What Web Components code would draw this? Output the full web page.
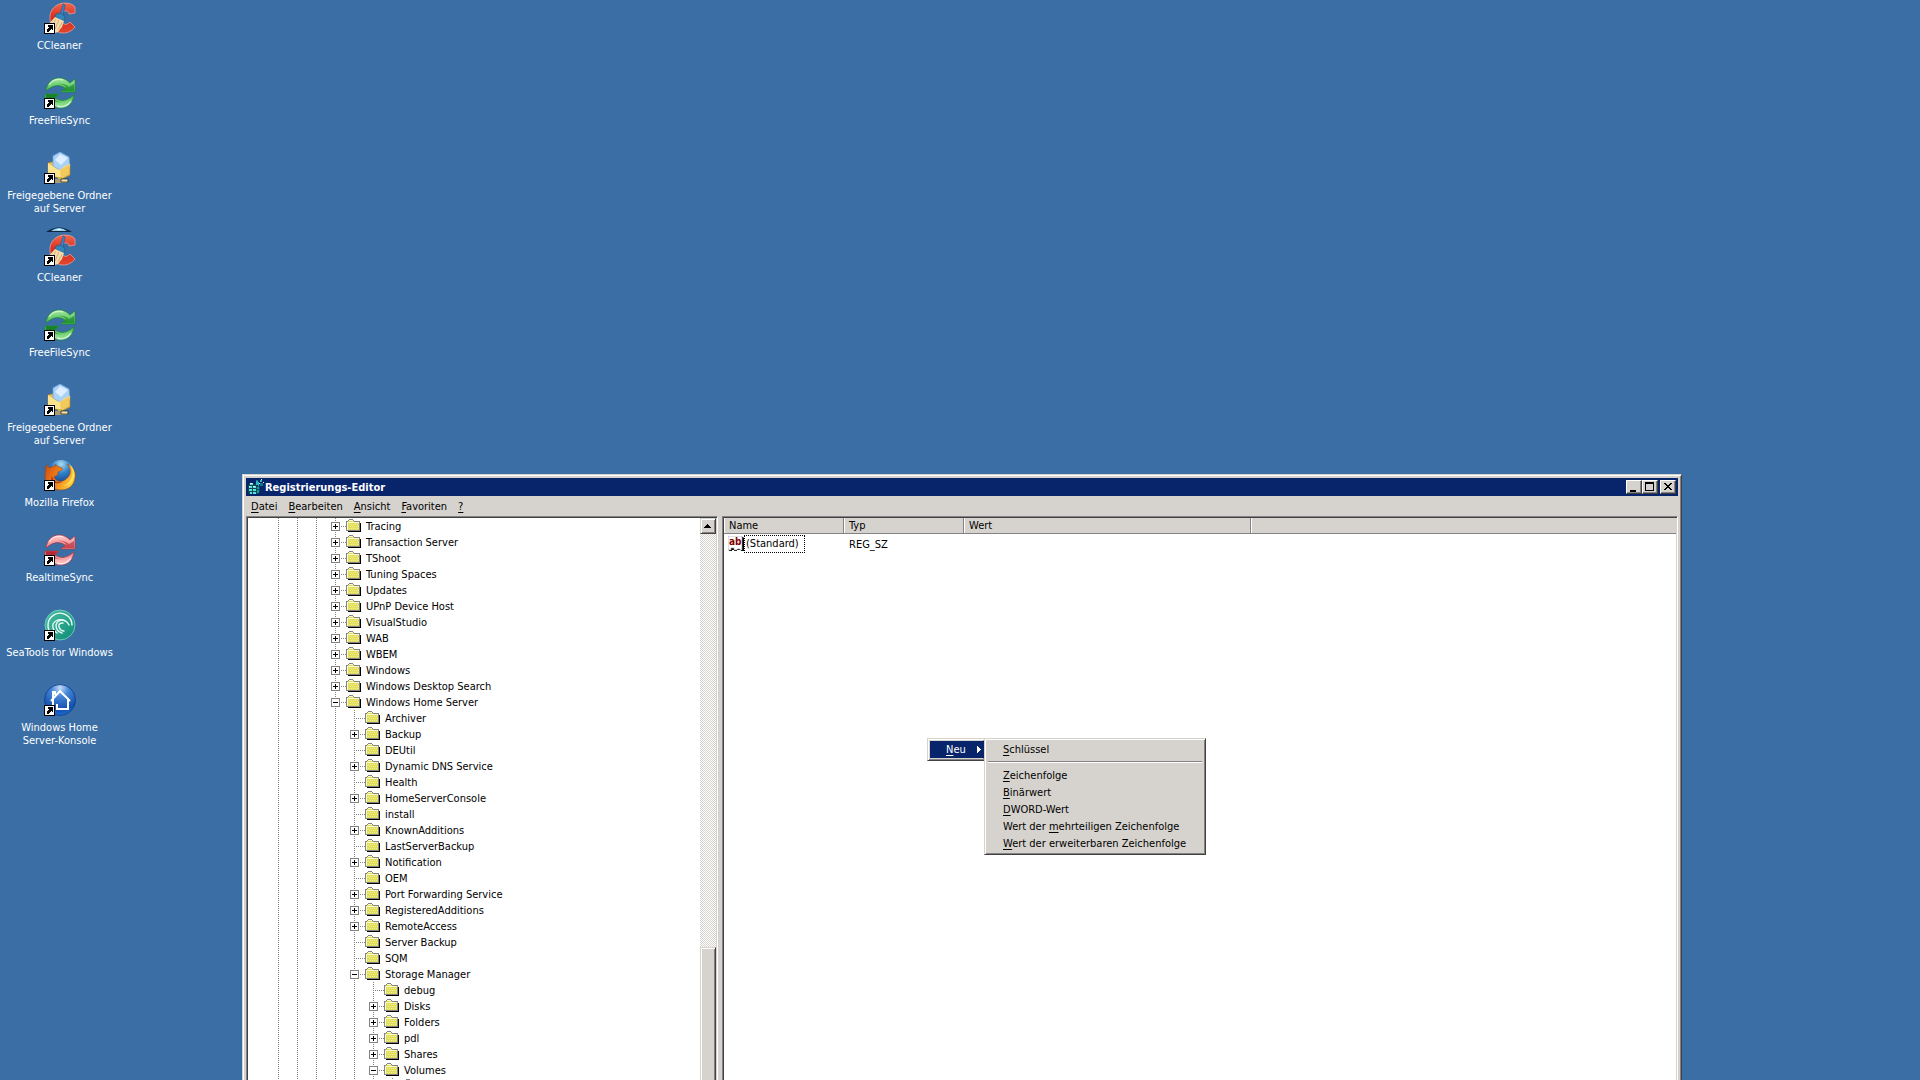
<!DOCTYPE html>
<html lang="de">
<head>
<meta charset="utf-8">
<title>Registrierungs-Editor</title>
<style>
html, body { height: 100%; margin: 0; }
body {
  --face: #d6d3ce; --shadow: #848284; --dark: #424142; --navy: #08246b;
  position: relative; overflow: hidden; background: #3a6ea5;
  font: 11px/13px "DejaVu Sans Condensed", "Liberation Sans", sans-serif; color: #000;
}
</style>
</head>
<body>
<desk-top>
  <desk-group>
    <desk-icon kind="ccleaner">CCleaner</desk-icon>
    <desk-icon kind="sync">FreeFileSync</desk-icon>
    <desk-icon kind="shared">Freigegebene Ordner auf Server</desk-icon>
  </desk-group>
  <desk-group>
    <desk-icon kind="ccleaner" peek>CCleaner</desk-icon>
    <desk-icon kind="sync">FreeFileSync</desk-icon>
    <desk-icon kind="shared">Freigegebene Ordner auf Server</desk-icon>
    <desk-icon kind="firefox">Mozilla Firefox</desk-icon>
    <desk-icon kind="realtime">RealtimeSync</desk-icon>
    <desk-icon kind="seatools">SeaTools for Windows</desk-icon>
    <desk-icon kind="home">Windows Home Server-Konsole</desk-icon>
  </desk-group>
</desk-top>

<app-window>
  <span slot="title">Registrierungs-Editor</span>
  <menu-entry slot="menu"><u>D</u>atei</menu-entry>
  <menu-entry slot="menu"><u>B</u>earbeiten</menu-entry>
  <menu-entry slot="menu"><u>A</u>nsicht</menu-entry>
  <menu-entry slot="menu"><u>F</u>avoriten</menu-entry>
  <menu-entry slot="menu"><u>?</u></menu-entry>
  <reg-tree slot="tree">
    <tree-row depth="0" state="plus">Tracing</tree-row>
    <tree-row depth="0" state="plus">Transaction Server</tree-row>
    <tree-row depth="0" state="plus">TShoot</tree-row>
    <tree-row depth="0" state="plus">Tuning Spaces</tree-row>
    <tree-row depth="0" state="plus">Updates</tree-row>
    <tree-row depth="0" state="plus">UPnP Device Host</tree-row>
    <tree-row depth="0" state="plus">VisualStudio</tree-row>
    <tree-row depth="0" state="plus">WAB</tree-row>
    <tree-row depth="0" state="plus">WBEM</tree-row>
    <tree-row depth="0" state="plus">Windows</tree-row>
    <tree-row depth="0" state="plus">Windows Desktop Search</tree-row>
    <tree-row depth="0" state="minus">Windows Home Server</tree-row>
    <tree-row depth="1">Archiver</tree-row>
    <tree-row depth="1" state="plus">Backup</tree-row>
    <tree-row depth="1">DEUtil</tree-row>
    <tree-row depth="1" state="plus">Dynamic DNS Service</tree-row>
    <tree-row depth="1">Health</tree-row>
    <tree-row depth="1" state="plus">HomeServerConsole</tree-row>
    <tree-row depth="1">install</tree-row>
    <tree-row depth="1" state="plus">KnownAdditions</tree-row>
    <tree-row depth="1">LastServerBackup</tree-row>
    <tree-row depth="1" state="plus">Notification</tree-row>
    <tree-row depth="1">OEM</tree-row>
    <tree-row depth="1" state="plus">Port Forwarding Service</tree-row>
    <tree-row depth="1" state="plus">RegisteredAdditions</tree-row>
    <tree-row depth="1" state="plus">RemoteAccess</tree-row>
    <tree-row depth="1">Server Backup</tree-row>
    <tree-row depth="1">SQM</tree-row>
    <tree-row depth="1" state="minus">Storage Manager</tree-row>
    <tree-row depth="2">debug</tree-row>
    <tree-row depth="2" state="plus">Disks</tree-row>
    <tree-row depth="2" state="plus">Folders</tree-row>
    <tree-row depth="2" state="plus">pdl</tree-row>
    <tree-row depth="2" state="plus">Shares</tree-row>
    <tree-row depth="2" state="minus">Volumes</tree-row>
    <tree-row depth="3"></tree-row>
  </reg-tree>
  <value-list slot="values"></value-list>
</app-window>

<context-menu>
  <menu-item slot="parent" selected><u>N</u>eu</menu-item>
  <menu-item><u>S</u>chlüssel</menu-item>
  <menu-rule></menu-rule>
  <menu-item><u>Z</u>eichenfolge</menu-item>
  <menu-item><u>B</u>inärwert</menu-item>
  <menu-item><u>D</u>WORD-Wert</menu-item>
  <menu-item>Wert der <u>m</u>ehrteiligen Zeichenfolge</menu-item>
  <menu-item><u>W</u>ert der erweiterbaren Zeichenfolge</menu-item>
</context-menu>

<script>
const define = (name, html) => customElements.define(name, class extends HTMLElement {
  constructor() {
    super();
    this.attachShadow({ mode: "open" });
  }
  connectedCallback() {
    const t = document.createElement("template");
    t.innerHTML = `<style>:host,*{box-sizing:border-box} button{font:inherit;color:inherit;border:0;padding:0;margin:0;background:none;text-align:inherit}</style>` +
      (typeof html === "function" ? html(this) : html);
    this.shadowRoot.replaceChildren(t.content.cloneNode(true));
  }
});

/* ---------- desktop ---------- */
define("desk-top", `<style>:host{display:flex;flex-direction:column;gap:7px;width:119px}</style><slot></slot>`);
define("desk-group", `<style>:host{display:flex;flex-direction:column}</style><slot></slot>`);

const syncArt = (light, mid, dark, edge) => `
  <defs><linearGradient id="a" x1="0" y1="0" x2="0" y2="1"><stop offset="0" stop-color="${light}"/><stop offset="1" stop-color="${mid}"/></linearGradient>
  <g id="half">
    <path d="M2 14C3 6 8 1 15 1c5 0 8 2 11 5l5-4v13H17l4-4c-6-4-12-3-19 3z" fill="url(#a)" stroke="${edge}" stroke-width=".7"/>
    <path d="M10 8c5-2 9-1 12 2l-4 4h12V7l-5 3C20 6 15 6 10 8z" fill="${dark}" opacity=".55"/>
    <path d="M5 8c3-5 9-7 14-5" fill="none" stroke="#fff" stroke-opacity=".55" stroke-width="1.5"/>
  </g></defs>
  <use href="#half"/><use href="#half" transform="rotate(180 16 16)"/>
  <path d="M2 17h12l-4 4-8 4z" fill="${dark}" opacity=".6"/>`;

const ART = {
  ccleaner: `
    <defs><linearGradient id="r" x1="0" y1="0" x2="0" y2="1"><stop offset="0" stop-color="#f0684c"/><stop offset=".5" stop-color="#d82a1c"/><stop offset="1" stop-color="#e2452c"/></linearGradient></defs>
    <path d="M31 5c-2-3-6-4-10-4C12 1 5 8 6 17c0 8 6 14 13 14 5 0 9-2 12-6l-5-5c-2 2-4 3-6 2-3-1-4-4-4-7 0-4 3-7 6-6 2 0 3 1 3 3l6-1z" fill="url(#r)" stroke="#f7a898" stroke-width=".7"/>
    <path d="M19 2l2 1-2 11-3-1z" fill="#3f7fc0" stroke="#1d4f8d" stroke-width=".5"/>
    <path d="M12 12l4-1 5 3-1 5-9-4z" fill="#2f86b8" stroke="#175a86" stroke-width=".6"/>
    <path d="M11 15l9 4-2 6-4 5-6 2-5-8z" fill="#f5dcae"/>
    <path d="M12 17l-5 8M15 18l-4 9M18 20l-4 8" stroke="#cf9f62" stroke-width=".8"/>`,
  sync: syncArt("#a4e8a0", "#3eb648", "#08751c", "#1a8a2c"),
  realtime: syncArt("#ffc8c8", "#f08084", "#a81420", "#a83040"),
  shared: `
    <path d="M4 11l4-1 18 2v11l-8 4-14-4z" fill="#e8bd4e" stroke="#b98a28" stroke-width=".6"/>
    <path d="M16 0l9 5 1 9-9 5-8-5 0-10z" fill="#a9d0f5" stroke="#6fa4d8" stroke-width=".7"/>
    <path d="M16 2l8 4-7 7-6-5z" fill="#dceeff"/>
    <path d="M4 11l9 6 3 1 5-4 5-2-2 10-7 4-13-4z" fill="#fbe38e"/><path d="M16 18l10-6-2 10-7 4z" fill="#f2c95a"/>
    <path d="M14 25h4v5h-4z" fill="#d8b34c"/><path d="M11 27h12v4H11z" fill="#a89c70"/><path d="M17 27h7v3h-7z" fill="#f2e8b0" stroke="#262b30" stroke-width=".8"/>`,
  firefox: `
    <defs><radialGradient id="g" cx=".5" cy=".15" r=".8"><stop offset="0" stop-color="#a6dcf4"/><stop offset=".4" stop-color="#3282c8"/><stop offset="1" stop-color="#112f7c"/></radialGradient>
    <linearGradient id="f" x1="0" y1="0" x2="1" y2=".4"><stop offset="0" stop-color="#d04a10"/><stop offset=".6" stop-color="#f38a1c"/><stop offset="1" stop-color="#fbc93a"/></linearGradient></defs>
    <circle cx="17" cy="15" r="14" fill="url(#g)"/>
    <path d="M2 6l4 3c2-2 4-2 6-2l-1-2 4 3c3 0 4 2 3 3l-4 2c0 4-3 4-4 5 2 5 8 6 12 2 5-3 6-10 1-15 8 4 9 9 8 14-1 8-7 12-14 12C8 31 1 25 1 17c0-4 1-7 1-11z" fill="url(#f)" stroke="#9a3c0c" stroke-width=".5"/>
    <path d="M25 5c4 5 5 11 1 17-2 3-5 5-9 5 9 1 14-6 13-13 0-4-2-7-5-9z" fill="#fde05a"/>
    <path d="M8 17c1 5 5 7 10 6-3 2-9 2-11-3z" fill="#b23a0c"/>`,
  seatools: `
    <defs><linearGradient id="t" x1="0" y1="0" x2="1" y2="1"><stop offset="0" stop-color="#4fc0a6"/><stop offset="1" stop-color="#0b8a74"/></linearGradient></defs>
    <circle cx="16" cy="16" r="15" fill="url(#t)" stroke="#7ed6c4" stroke-width=".8"/>
    <g fill="none" stroke="#e8fbf6" stroke-width="1.4" stroke-linecap="round">
    <path d="M28 16A12 12 0 1 0 9 26"/><path d="M25 16A9 9 0 0 0 9 15a9 9 0 0 0 4 9"/><path d="M21 12a6 6 0 0 0-9 4c0 4 2 7 6 8"/><path d="M19 14c-3 0-5 1-4 4s3 4 5 4"/></g>`,
  home: `
    <defs><radialGradient id="h" cx=".5" cy=".1" r=".95"><stop offset="0" stop-color="#c4dcf6"/><stop offset=".3" stop-color="#4486d8"/><stop offset=".75" stop-color="#1450b0"/><stop offset="1" stop-color="#1e74dc"/></radialGradient></defs>
    <circle cx="16" cy="16" r="15.500" fill="url(#h)" stroke="#123c88" stroke-width=".8"/>
    <path d="M7 17L16 7l10 10M9 17V8h2v3M9 17v8M24 15v10H13v-5" fill="none" stroke="#fff" stroke-width="2"/>`
};

define("desk-icon", el => `
  <style>
    :host{display:block;height:75px}
    button{display:flex;flex-direction:column;align-items:center;width:100%;padding-top:2px;gap:5px;color:#fff;position:relative;text-align:center}
    svg{display:block}
    .label{max-width:110px}
    .peek{position:absolute;top:-5px;left:46px}
  </style>
  <button type="button">
    ${el.hasAttribute("peek") ? `<svg class="peek" width="26" height="5" viewBox="0 0 26 5"><path d="M0 5Q13-4 26 5z" fill="#10233f"/><path d="M5 4Q13-2 21 4z" fill="#8fd4f2"/><path d="M10 3q3-2 6 0z" fill="#fff"/></svg>` : ""}
    <svg width="32" height="32" viewBox="0 0 32 32">${ART[el.getAttribute("kind")]}
      <rect x=".5" y="21.500" width="10" height="10" fill="#fff" stroke="#000"/>
      <path d="M4 23h5v5H8v-1H7v1H6v1H5v1H3v-3h1v-1h1v-1h-1z" fill="#000"/></svg>
    <span class="label"><slot></slot></span>
  </button>`);

/* ---------- registry editor window ---------- */
define("menu-entry", `<style>:host{display:block} button{display:block;height:20px;padding:0 5px} ::slotted(u){text-underline-offset:2px}</style><button type="button"><slot></slot></button>`);

define("app-window", `
  <style>
    :host{position:absolute;left:242px;right:238px;top:474px;bottom:-30px;display:flex;flex-direction:column;
      background:var(--face);border:1px solid;border-color:var(--face) var(--dark) var(--dark) var(--face);
      box-shadow:inset 1px 1px #fff,inset -1px -1px var(--shadow);padding:3px}
    header{display:flex;align-items:center;height:18px;background:var(--navy);color:#fff;padding:0 2px}
    h1{flex:1;margin:0 0 0 1px;padding-top:1px;font:bold 11px/17px "DejaVu Sans Condensed","Liberation Sans",sans-serif}
    .ctl{width:16px;height:14px;background:var(--face);border:1px solid;border-color:#fff var(--dark) var(--dark) #fff;box-shadow:inset -1px -1px var(--shadow)}
    .ctl svg{display:block}
    .close{margin-left:2px}
    nav{display:flex;gap:1px;height:20px}
    main{flex:1;display:flex;gap:4px;min-height:0}
    .pane{border:1px solid;border-color:var(--shadow) #fff #fff var(--shadow);box-shadow:inset 1px 1px var(--dark),inset -1px 0 var(--face);padding:1px;background:#fff;overflow:hidden;min-width:0}
    .left{display:flex;flex:0 0 472px}
    .right{flex:1}
    .tree{flex:1;min-width:0;overflow:hidden}
  </style>
  <header>
    <svg width="16" height="16" viewBox="0 0 16 16" shape-rendering="crispEdges">
      <path d="M1 4h4v1h4v2h3v6h-1v2H1v-1H0V6h1z" fill="#0c4a52"/>
      <path d="M2 4h3v2H2zM1 7h3v2H1zM5 7h3v2H5zM1 10h3v2H1zM5 10h3v2H5zM2 13h2v2H2zM5 13h3v2H5z" fill="#5ce0e4"/>
      <path d="M9 8h2v2H9zM9 11h2v3H9z" fill="#189aa4"/>
      <path d="M2 4h2v1H2zM1 7h1v1H1zM5 7h2v1H5z" fill="#e8ffff"/>
      <path d="M8 2l3 1v4L8 6zM12 1h2v2h-2z" fill="#2ab8c0"/><path d="M12 4h3v3h-3zM8 1h2v1H8z" fill="#0f7580"/><path d="M11 4h1v1h-1zM13 0h1v1h-1zM15 3h1v1h-1z" fill="#c8ffff"/>
    </svg>
    <h1><slot name="title"></slot></h1>
    <button class="ctl" type="button" aria-label="Minimieren"><svg width="14" height="12" viewBox="0 0 14 12"><path d="M3 9h6v2H3z"/></svg></button>
    <button class="ctl" type="button" aria-label="Maximieren"><svg width="14" height="12" viewBox="0 0 14 12"><path fill-rule="evenodd" d="M2 1h9v9H2zM3 3v6h7V3z"/></svg></button>
    <button class="ctl close" type="button" aria-label="Schließen"><svg width="14" height="12" viewBox="0 0 14 12" shape-rendering="crispEdges"><path d="M3 2h2v1h1v1h2V3h1V2h2v1h-1v1H9v1H8v1h1v1h1v1h1v1H9V8H8V7H6v1H5v1H3V8h1V7h1V6h1V5H5V4H4V3H3z"/></svg></button>
  </header>
  <nav><slot name="menu"></slot></nav>
  <main>
    <section class="pane left"><div class="tree"><slot name="tree"></slot></div><scroll-bar></scroll-bar></section>
    <section class="pane right"><slot name="values"></slot></section>
  </main>`);

define("scroll-bar", `
  <style>
    :host{flex:0 0 16px;display:flex;flex-direction:column;background:repeating-conic-gradient(#fff 0 25%,var(--face) 0 50%) 0 0/2px 2px}
    button{display:block;background:var(--face);border:1px solid;border-color:var(--face) var(--dark) var(--dark) var(--face);box-shadow:inset 1px 1px #fff,inset -1px -1px var(--shadow)}
    .up{height:16px}
    .up svg{display:block;margin-left:3px}
    .track{flex:414 0 0}
    .thumb{flex:156 0 0}
  </style>
  <button class="up" type="button" aria-label="Nach oben"><svg width="7" height="4" viewBox="0 0 7 4" shape-rendering="crispEdges"><path d="M3 0h1v1h1v1h1v1h1v1H0V3h1V2h1V1h1z"/></svg></button>
  <div class="track"></div><button class="thumb" type="button" aria-label="Bildlauf"></button>`);

define("reg-tree", `<style>:host{display:flex;flex-direction:column}</style><slot></slot>`);

define("tree-row", el => {
  const depth = +el.getAttribute("depth"), state = el.getAttribute("state");
  return `
  <style>
    :host{display:flex;align-items:center;flex:0 0 16px;height:16px;padding-left:21px;white-space:nowrap}
    .cell{flex:0 0 20px;margin-right:-1px;height:16px;display:flex;align-items:center;
      background:repeating-linear-gradient(var(--shadow) 0 1px,transparent 1px 2px) 9px 0/1px 100% no-repeat}
    .own{background:repeating-linear-gradient(var(--shadow) 0 1px,transparent 1px 2px) 9px 0/1px 100% no-repeat,
      repeating-linear-gradient(90deg,var(--shadow) 0 1px,transparent 1px 2px) 9px 8px/11px 1px no-repeat}
    button{width:9px;height:9px;margin:1px 0 0 5px;border:1px solid var(--shadow);background:#fff}
    button svg,.folder{display:block}
    .folder{margin:0 4px 0 1px;flex:none}
    .name{line-height:15px;padding-top:1px}
  </style>
  ${'<span class="cell"></span>'.repeat(3 + depth)}
  <span class="cell own">${state ? `<button type="button" aria-label="${state === "plus" ? "Erweitern" : "Reduzieren"}"><svg width="7" height="7" viewBox="0 0 7 7"><path d="${state === "plus" ? "M1 3h2V1h1v2h2v1H4v2H3V4H1z" : "M1 3h5v1H1z"}"/></svg></button>` : ""}</span>
  <svg class="folder" width="16" height="16" viewBox="0 0 16 16" shape-rendering="crispEdges">
    <path d="M14 5h1v9H2v-1h12z" fill="#000"/>
    <path d="M1 3h1V2h1V1h4v1h1v1h6v10H0V3z" fill="#848284"/>
    <path d="M1 4h1V3h1V2h4v1h1v1h5v8H1z" fill="#e0de5a"/>
    <path d="M3 2h4v1H3zM1 4h12v1H1zM1 5h1v7H1z" fill="#fbfad0"/>
    <path d="M3 6h1v1H3zM5 6h1v1H5zM7 6h1v1H7zM9 6h1v1H9zM11 6h1v1h-1zM4 8h1v1H4zM6 8h1v1H6zM8 8h1v1H8zM10 8h1v1h-1zM12 8h1v1h-1zM3 10h1v1H3zM5 10h1v1H5zM7 10h1v1H7zM9 10h1v1H9zM11 10h1v1h-1z" fill="#f0ee96"/>
  </svg>
  <span class="name"><slot></slot></span>`;
});

define("value-list", `
  <style>
    :host{display:block}
    table{width:100%;table-layout:fixed;border-collapse:separate;border-spacing:0}
    th{height:16px;padding:1px 0 0 5px;text-align:left;font-weight:normal;line-height:14px;background:var(--face);
      border-right:1px solid var(--shadow);border-bottom:1px solid var(--shadow);box-shadow:inset 1px 0 #fff}
    th:last-child{border-right:0}
    td{height:20px;padding:0 0 0 5px}
    .key{display:flex;align-items:center;padding-left:4px}
    .focus{border:1px dotted #000;height:18px;line-height:16px;padding:0 5px 0 1px;flex:none}
    svg{display:block;flex:none}
    .name,.type{width:120px}.value{width:287px}
  </style>
  <table>
    <colgroup><col class="name"><col class="type"><col class="value"><col></colgroup>
    <thead><tr><th>Name</th><th>Typ</th><th>Wert</th><th></th></tr></thead>
    <tbody><tr><td class="key">
      <svg width="16" height="16" viewBox="0 0 16 16"><path d="M1 1h14l1 1v13h-3v-1H9v1H6v-1H4v1H1z" fill="#000"/><path d="M0 0h14v14h-2v-1H9v1H6v-2H3v2H0z" fill="#fff" stroke="#9a9a9a" stroke-width=".6"/><text x="1" y="9" font-family="DejaVu Sans Condensed" font-size="10" font-weight="bold" fill="#840000">ab</text></svg>
      <span class="focus">(Standard)</span></td><td>REG_SZ</td><td></td><td></td></tr></tbody>
  </table>`);

/* ---------- context menu ---------- */
define("context-menu", `
  <style>
    :host{position:absolute;left:927px;top:738px;display:flex;align-items:flex-start}
    .box{background:var(--face);border:1px solid;border-color:var(--face) var(--dark) var(--dark) var(--face);
      box-shadow:inset 1px 1px #fff,inset -1px -1px var(--shadow);padding:2px}
    .parent{width:57px;padding-right:0;border-right:0}
    .sub{width:222px}
  </style>
  <div class="box parent"><slot name="parent"></slot></div>
  <div class="box sub"><slot></slot></div>`);
define("menu-item", el => `
  <style>
    :host{display:block}
    button{display:flex;align-items:center;justify-content:space-between;width:100%;height:17px;line-height:17px;padding:0 3px 0 16px;white-space:nowrap}
    ::slotted(u){text-underline-offset:2px}
    :host([selected]) button{background:var(--navy);color:#fff}
    svg{fill:currentColor}
  </style>
  <button type="button"><span><slot></slot></span>${el.hasAttribute("selected") ? `<svg width="4" height="7" viewBox="0 0 4 7" shape-rendering="crispEdges"><path d="M0 0h1v1h1v1h1v1h1v1H3v1H2v1H1v1H0z"/></svg>` : ""}</button>`);
define("menu-rule", `<style>:host{display:block;height:9px;padding:3px 1px 0} div{height:2px;border-top:1px solid var(--shadow);border-bottom:1px solid #fff}</style><div></div>`);
</script>
</body>
</html>
